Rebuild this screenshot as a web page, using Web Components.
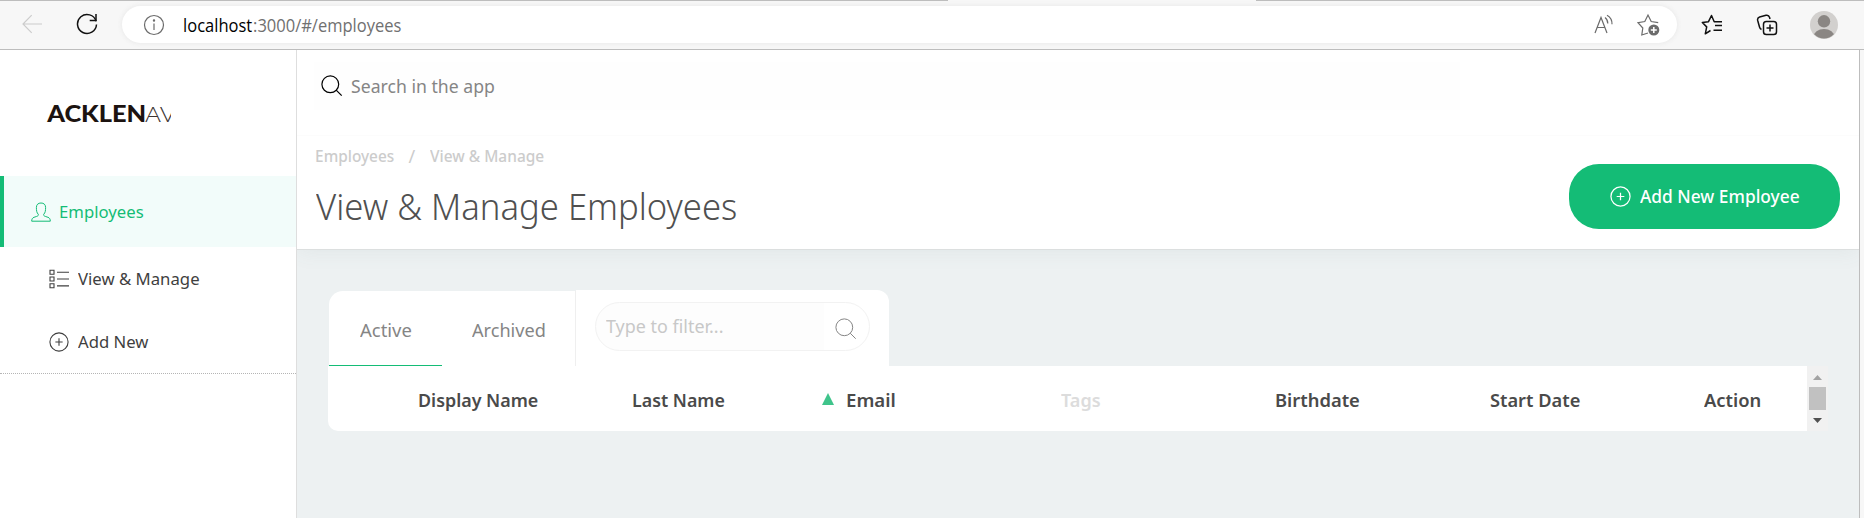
<!DOCTYPE html>
<html lang="en">
<head>
<meta charset="utf-8">
<title>View &amp; Manage Employees</title>
<style>
html,body{margin:0;height:100%;overflow:hidden}
body{font-family:"Noto Sans","Open Sans",sans-serif;background:#f7f7f7}
</style>
</head>
<body>
<app-window></app-window>
<script>
const define = (name, html, init) => customElements.define(name, class extends HTMLElement {
  connectedCallback() {
    if (this.shadowRoot) return;
    const t = document.createElement('template');
    t.innerHTML = html;
    this.attachShadow({mode: 'open'}).append(t.content.cloneNode(true));
    if (init) init(this);
  }
});

/* A one-line label condensed so its ink fills the given width. */
const pen = document.createElement('canvas').getContext('2d');
define('fit-label', `<style>
:host{display:block;flex:none;white-space:nowrap;line-height:26px;height:26px}
span{display:inline-block;transform-origin:0 50%;white-space:pre}
</style><span><slot></slot></span>`, el => {
  const w = +el.getAttribute('w'), size = +(el.getAttribute('size') || 18);
  const weight = el.getAttribute('weight') || 400;
  const family = el.getAttribute('family') || '"Noto Sans"';
  Object.assign(el.style, {width: w + 'px', fontSize: size + 'px', fontWeight: weight, fontFamily: family + ',sans-serif'});
  pen.font = `${weight} ${size}px ${family},sans-serif`;
  const m = pen.measureText(el.textContent);
  const k = w / (m.actualBoundingBoxRight + m.actualBoundingBoxLeft);
  el.shadowRoot.querySelector('span').style.transform = `translateX(${m.actualBoundingBoxLeft * k}px) scaleX(${k})`;
});

const icons = {
  back: [20, '<path d="M20 10H1M9.700 1.200 1 10l8.700 8.800"/>'],
  reload: [22, '<path d="M20.100 8.200A9.500 9.500 0 1 0 20.500 11.500" stroke-width="1.500"/><path d="M20 1v6.500h-6.300" stroke-width="1.500"/>'],
  info: [22, '<circle cx="11" cy="11" r="9.500"/><path d="M11 9.500v6.500"/><circle cx="11" cy="6.500" r=".6" fill="currentColor"/>'],
  read: [22, '<path d="M2 19 8 3.500 14 19M4.200 13.500h7.600M12 3.500c2 1.500 2.800 3.500 2.800 6M14 1.200c3.500 2 5.200 5 5 9"/>'],
  addstar: [24, '<path d="M11 20 4.800 22l1-7L1 9.700 7.800 8.500 11 2l3.200 6.500 7 1.200"/><circle cx="16.800" cy="17" r="5.500" fill="currentColor" stroke="none"/><path d="M16.800 14v6M13.800 17h6" stroke="#fff" stroke-width="1.500"/>'],
  stars: [22, '<path d="M9.500 16.500 4.300 19.800l1.400-6.900L1.300 8.500l6.200-.8L10.500 1.500l2.700 6.200H21M14 11.500h7M12.500 16.200H21" stroke-width="1.500" stroke-linejoin="round"/>'],
  collections: [22, '<rect x="7.500" y="7.500" width="13" height="13" rx="2.800"/><path d="M14 10.500v7M10.500 14h7"/><path d="M5.500 15.500C4.300 15 3.800 14.300 3.500 13L1.700 6.500C1.200 4.500 2 3.500 3.600 3L10 1.300c2-.5 3 .3 3.600 2.200l.4 1.500"/>'],
  search: [22, '<circle cx="9.300" cy="9.300" r="8.400"/><path d="m15.200 15.200 5.500 5.500"/>'],
  user: [20, '<path d="M7.300 12.300C5.600 10.800 5.400 8.200 5.400 5.500 5.400 2.500 7.200 1 10 1s4.600 1.500 4.600 4.500c0 2.700-.2 5.300-1.900 6.800-.3 1 .2 1.700 1.600 2.100l2.700.9c1.600.6 2.300 1.800 2.300 3.900H.7c0-2.100.7-3.300 2.300-3.900l2.700-.9c1.400-.4 1.900-1.100 1.600-2.100Z"/>'],
  list: [20, '<path d="M1 1.200h4v4H1zM1 8h4v4H1zM1 14.800h4v4H1zM8 3.200h12M8 10h12M8 16.900h12"/>'],
  plus: [22, '<circle cx="11" cy="11" r="10"/><path d="M11 7v8M7 11h8"/>']
};
define('ui-icon', '<style>:host{display:block;flex:none}svg{display:block}</style>', el => {
  const [box, body] = icons[el.getAttribute('name')];
  const s = el.getAttribute('size') || box;
  el.shadowRoot.innerHTML += `<svg width="${s}" height="${s}" viewBox="0 0 ${box} ${box}" fill="none" stroke="currentColor" stroke-width="${el.getAttribute('line') || 1.2}">${body}</svg>`;
});

define('browser-bar', `<style>
:host{display:flex;align-items:flex-start;box-sizing:border-box;height:50px;background:#f7f7f7;border-bottom:1px solid #bdbdbd;position:relative}
.edge{position:absolute;top:0;left:0;right:0;height:1px;background:linear-gradient(90deg,#bdbdbd 948px,transparent 948px 1256px,#bdbdbd 1256px)}
.nav{display:flex;box-sizing:border-box;width:122px;padding:14px 0 0 22px;gap:34px}
.back{color:#ccc}.reload{color:#111;margin-top:-1px}
.pill{margin-top:6px;height:37px;width:1555px;border-radius:19px;background:#fff;box-shadow:0 0 4px 1px #ebebeb;display:flex;align-items:center;box-sizing:border-box;padding-left:21px;color:#6b6b6b}
.host{color:#000;margin-left:19px}.path{color:#707070;margin-left:2px}
.tools{margin-left:auto;display:flex;gap:21px;align-items:center;padding-right:16px}
.tools ui-icon:first-child{margin-left:-1px;margin-right:1px}
.right{display:flex;align-items:center;height:50px;padding-left:24px;gap:33px;color:#111}
.avatar{display:block;margin-left:-1px}
</style><div class="edge"></div>
<div class="nav"><ui-icon class="back" name="back"></ui-icon><ui-icon class="reload" name="reload"></ui-icon></div>
<div class="pill"><ui-icon name="info"></ui-icon><fit-label class="host" w="68" size="17.500" family='"Open Sans"'>localhost</fit-label><fit-label class="path" w="147" size="17.500" family='"Open Sans"'>:3000/#/employees</fit-label>
<div class="tools"><ui-icon name="read"></ui-icon><ui-icon name="addstar"></ui-icon></div></div>
<div class="right"><ui-icon name="stars"></ui-icon><ui-icon name="collections" line="1.500"></ui-icon>
<svg class="avatar" width="28" height="28"><defs><clipPath id="c"><circle cx="14" cy="14" r="13.500"/></clipPath></defs><circle cx="14" cy="14" r="14" fill="#d2d0ce"/><circle cx="14" cy="10.300" r="6.200" fill="#8a8683"/><ellipse cx="14" cy="26" rx="10.500" ry="8" fill="#8a8683" clip-path="url(#c)"/></svg></div>`);

define('brand-logo', `<style>
:host{display:flex;align-items:center;height:26px;width:125px;overflow:hidden;color:#1c1310}
.thin{color:#3b3330}
</style><fit-label w="99" size="22" weight="900" family="Lato">ACKLEN</fit-label><fit-label class="thin" w="31.500" size="22" weight="300" family="Lato">AV</fit-label>`);

define('nav-item', `<style>
:host{display:flex;align-items:center;box-sizing:border-box;color:#3f3f3f}
:host([level="1"]){height:71px;border-left:4px solid #14bc76;background:#f2fcfa;color:#14bc76;padding-left:27px;gap:9.300px}
:host([level="2"]){height:63px;padding-left:49px;gap:9.300px;padding-top:1px}
</style><slot></slot>`);

define('side-bar', `<style>
:host{display:block;box-sizing:border-box;width:297px;background:#fff;border-right:1px solid #dedede;flex:none}
.brand{height:126px;box-sizing:border-box;padding:51px 0 0 46px}
.group{height:197px;border-bottom:1px dotted #b5b5b5}
</style><div class="brand"><brand-logo></brand-logo></div>
<div class="group">
<nav-item level="1"><ui-icon name="user" line="1"></ui-icon><fit-label w="83.500" size="17">Employees</fit-label></nav-item>
<nav-item level="2"><ui-icon name="list" line="1.100"></ui-icon><fit-label w="121" size="17">View &amp; Manage</fit-label></nav-item>
<nav-item level="2"><ui-icon name="plus" size="20"></ui-icon><fit-label w="71" size="17">Add New</fit-label></nav-item>
</div>`);

define('page-header', `<style>
:host{display:block;box-sizing:border-box;height:200px;background:#fff;border-bottom:1px solid #dcdfdf;box-shadow:0 2px 20px rgba(90,110,110,.08);position:relative}
.search{display:flex;align-items:center;box-sizing:border-box;width:1146px;height:48px;margin-left:17px;padding-left:6.500px;gap:8.500px;color:#858585;background:#fefefe}
.search ui-icon{color:#000}
.top{height:86px;padding-top:12px;box-sizing:border-box;border-bottom:1px solid #fcfcfc}
.main{display:flex;justify-content:space-between;padding:0 19px 0 19px}
.crumbs{display:flex;color:#ccc;padding-top:7px;gap:14.500px}
h1{margin:12px 0 0;font-weight:300;color:#505050}
h1 fit-label{line-height:52px;height:52px;margin-left:-.5px}
.add{margin-top:28px;width:271px;height:65px;border-radius:30px;background:#14bc76;color:#fff;display:flex;align-items:center;box-sizing:border-box;padding-left:41px;gap:9px}
.add fit-label{margin-top:-1px}
</style><div class="top"><div class="search"><ui-icon name="search"></ui-icon><fit-label w="143.500" size="18.500">Search in the app</fit-label></div></div>
<div class="main"><div><div class="crumbs"><fit-label w="78" size="17" weight="500">Employees</fit-label><fit-label w="7" size="18">/</fit-label><fit-label w="113.500" size="17" weight="500">View &amp; Manage</fit-label></div>
<h1><fit-label w="420.500" size="36" weight="300">View &amp; Manage Employees</fit-label></h1></div>
<div class="add"><ui-icon name="plus" size="21" line="1.300"></ui-icon><fit-label w="159" size="18.500" weight="500">Add New Employee</fit-label></div></div>`);

define('filter-box', `<style>
:host{display:block;box-sizing:border-box;width:313px;height:76px;background:#fff;border-radius:0 12px 0 0;padding:12px 0 0 19px}
.field{display:flex;width:275px;height:49px;box-sizing:border-box;border:1px solid #f2f2f2;border-radius:25px;background:linear-gradient(90deg,#fdfdfd 228px,#fff 228px);align-items:center;padding-left:10px;color:#c8c8c8}
.field fit-label{margin-top:-1px}
.field ui-icon{margin:4px 0 0 112.500px;color:#858585}
</style><div class="field"><fit-label w="116.500" size="18.500">Type to filter...</fit-label><ui-icon name="search" line="1"></ui-icon></div>`);

define('tab-strip', `<style>
:host{display:flex;align-items:flex-end;padding-left:1px;height:76px}
.tabs{display:flex;box-sizing:border-box;width:247px;height:75px;background:#fff;border-radius:14px 0 0 0;border-right:1px solid #efefef;color:#858585}
.tab{box-sizing:border-box;padding:26px 0 0 31px;width:113px}
.tab + .tab{padding-left:29.500px}
.on{border-bottom:1px solid #14bc76}
</style><div class="tabs"><div class="tab on"><fit-label w="51.500" size="18.500">Active</fit-label></div><div class="tab"><fit-label w="72.500" size="18.500">Archived</fit-label></div></div><filter-box></filter-box>`);

define('scroll-bar', `<style>
:host{display:flex;flex-direction:column;align-items:center;width:21px;height:65px;background:#f1f1f1;box-sizing:border-box;padding-right:1px;flex:none}
svg,i{display:block;flex:none}i{width:17px;height:23px;background:#c1c1c1;margin:7px 0 8px}
.up{margin-top:9px}
</style><svg class="up" width="9" height="5"><path d="M0 5 4.500 0 9 5Z" fill="#a3a3a3"/></svg><i></i><svg width="9" height="5"><path d="M0 0h9L4.500 5Z" fill="#505050"/></svg>`);

define('employee-table', `<style>
:host{display:flex;height:65px}
.head{width:1479px;box-sizing:border-box;padding-left:90.500px;height:65px;background:#fff;border-radius:0 0 0 10px;display:grid;grid-template-columns:repeat(6,214.300px) 1fr;align-items:center;color:#4a4a4a}
.head fit-label{margin-top:3px}
.sorted{position:relative;left:-.5px}
.sorted svg{position:absolute;left:-25px;top:9px}
.dim{color:#dcdcdc}
</style><div class="head">
<fit-label w="118.500" size="18.500" weight="600">Display Name</fit-label>
<fit-label w="91" size="18.500" weight="600">Last Name</fit-label>
<div class="sorted"><svg width="12" height="12"><path d="M0 12 6 0l6 12Z" fill="#3fc48b"/></svg><fit-label w="47.500" size="18.500" weight="600">Email</fit-label></div>
<fit-label class="dim" w="39.500" size="18.500" weight="600">Tags</fit-label>
<fit-label w="83" size="18.500" weight="600">Birthdate</fit-label>
<fit-label w="89.500" size="18.500" weight="600">Start Date</fit-label>
<fit-label w="56.500" size="18.500" weight="600">Action</fit-label>
</div><scroll-bar></scroll-bar>`);

define('app-window', `<style>
:host{display:block;width:1864px;height:518px;overflow:hidden}
.view{display:flex;box-sizing:border-box;width:1860px;height:468px;border-right:1px solid #bdbdbd}
main{flex:1;background:#edf1f2;overflow:hidden}
.body{padding:40px 0 0 31px}
</style><browser-bar></browser-bar><div class="view"><side-bar></side-bar><main><page-header></page-header><div class="body"><tab-strip></tab-strip><employee-table></employee-table></div></main></div>`);
</script>
</body>
</html>
